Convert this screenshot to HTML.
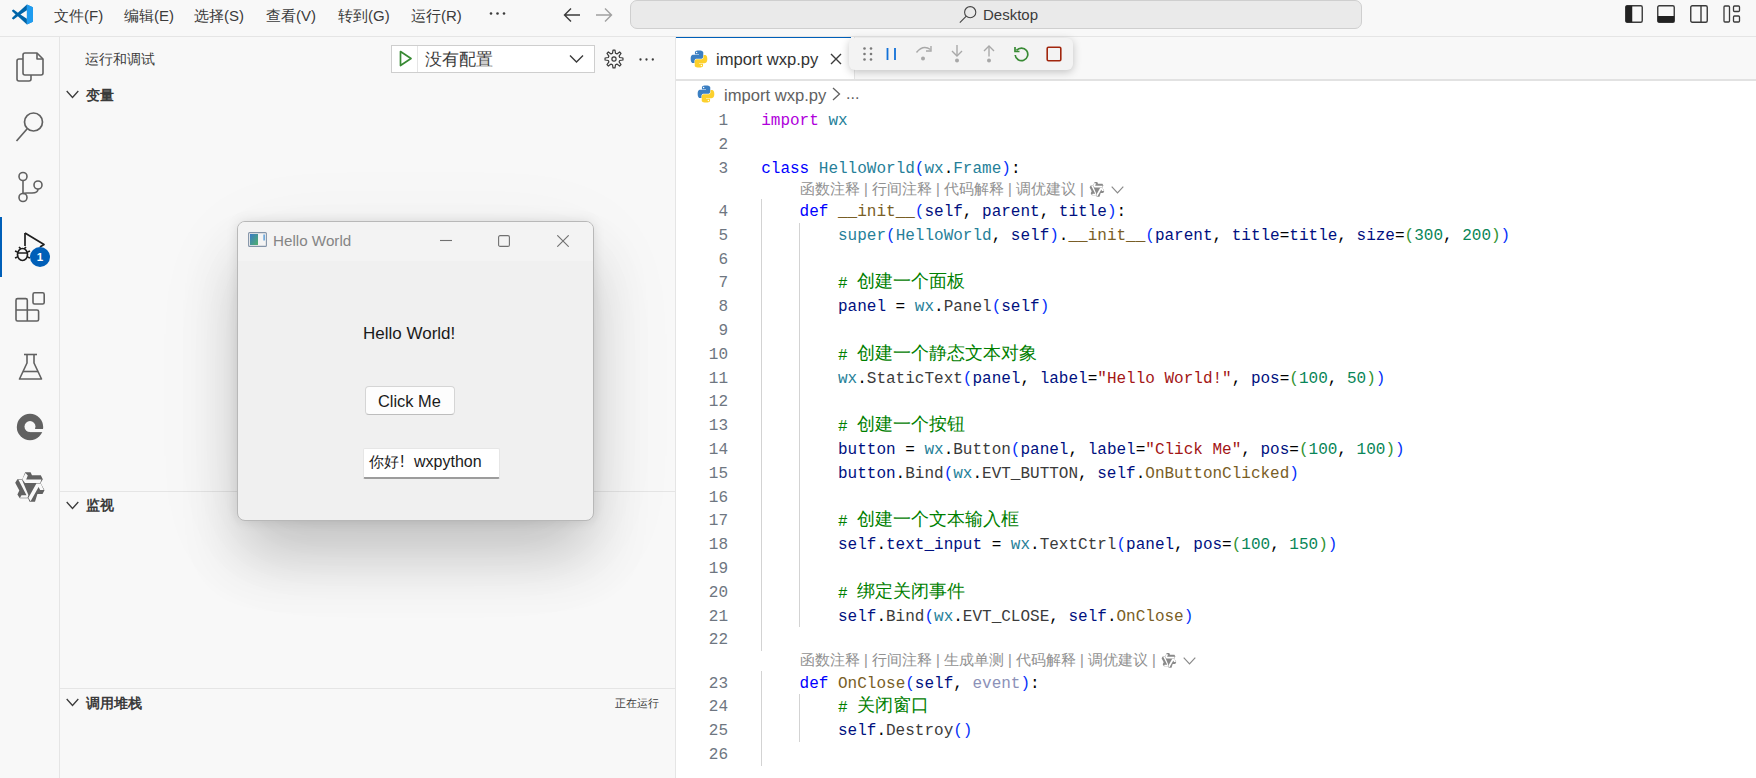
<!DOCTYPE html>
<html><head><meta charset="utf-8">
<style>
*{box-sizing:border-box}
html,body{margin:0;padding:0}
body{width:1756px;height:778px;overflow:hidden;position:relative;background:#f8f8f8;font-family:"Liberation Sans",sans-serif;color:#3b3b3b}
.a{position:absolute}
.menu{position:absolute;top:5px;font-size:15px;line-height:22px;color:#3b3b3b;white-space:nowrap}
.ico{position:absolute}
.ln{position:absolute;left:690px;width:38px;text-align:right;font-family:"Liberation Mono",monospace;font-size:16px;line-height:24px;height:24px;color:#6e7681;white-space:pre}
.cl{position:absolute;left:761.2px;font-family:"Liberation Mono",monospace;font-size:16px;line-height:24px;height:24px;white-space:pre}
.ig{position:absolute;width:1px;background:#d3d3d3}
.lens{position:absolute;left:800px;font-size:14.7px;line-height:19px;color:#919191;white-space:pre}
.sect{position:absolute;left:86px;margin-top:1px;font-size:13.75px;font-weight:bold;color:#3b3b3b;line-height:20px}
.chev{position:absolute}
.cjk{font-size:17.6px;position:relative;top:-1px}
</style></head>
<body>
<!-- title bar -->
<div class="a" style="left:0;top:0;width:1756px;height:36px;background:#f8f8f8"></div>
<div class="a" style="left:0;top:36px;width:1756px;height:1px;background:#e5e5e5"></div>
<svg class="ico" style="left:12px;top:4px" width="21" height="21" viewBox="0 0 100 100">
 <path d="M71 2 L97 14 Q100 16 100 20 L100 80 Q100 84 97 86 L71 98 Z" fill="#2489ca"/>
 <path d="M71 2 L28 42 L9 27 Q6 25 3 28 L1 30 Q-1 33 2 36 L17 50 L2 64 Q-1 67 1 70 L3 72 Q6 75 9 73 L28 58 L71 98 L71 70 L40 50 L71 30 Z" fill="#0065a9"/>
 <path d="M71 2 L97 14 Q100 16 100 20 L100 80 Q100 84 97 86 L71 98 Z" fill="#1f9cf0"/>
</svg>
<div class="menu" style="left:54px">文件(F)</div>
<div class="menu" style="left:124px">编辑(E)</div>
<div class="menu" style="left:194px">选择(S)</div>
<div class="menu" style="left:266px">查看(V)</div>
<div class="menu" style="left:338px">转到(G)</div>
<div class="menu" style="left:411px">运行(R)</div>
<svg class="ico" style="left:489px;top:11px" width="17" height="5" viewBox="0 0 17 5"><circle cx="2" cy="2.5" r="1.3" fill="#3b3b3b"/><circle cx="8.5" cy="2.5" r="1.3" fill="#3b3b3b"/><circle cx="15" cy="2.5" r="1.3" fill="#3b3b3b"/></svg>
<svg class="ico" style="left:563px;top:7px" width="18" height="16" viewBox="0 0 18 16"><path d="M1.5 8 H17 M8 1.5 L1.5 8 L8 14.5" stroke="#3b3b3b" stroke-width="1.4" fill="none"/></svg>
<svg class="ico" style="left:595px;top:7px" width="18" height="16" viewBox="0 0 18 16"><path d="M16.5 8 H1 M10 1.5 L16.5 8 L10 14.5" stroke="#a0a0a0" stroke-width="1.4" fill="none"/></svg>
<div class="a" style="left:630px;top:0px;width:732px;height:29px;background:#eaeaea;border:1px solid #cfcfcf;border-radius:7px"></div>
<svg class="ico" style="left:959px;top:5px" width="19" height="19" viewBox="0 0 19 19"><circle cx="11.2" cy="7.2" r="5.6" stroke="#444" stroke-width="1.1" fill="none"/><path d="M7.3 11.2 L0.8 17.7" stroke="#444" stroke-width="1.1"/></svg>
<div class="a" style="left:983px;top:4.5px;font-size:15px;line-height:20px;color:#3b3b3b">Desktop</div>
<!-- layout icons -->
<svg class="ico" style="left:1625px;top:5px" width="18" height="18" viewBox="0 0 18 18"><rect x="0.75" y="0.75" width="16.5" height="16.5" rx="1.5" fill="none" stroke="#3b3b3b" stroke-width="1.4"/><rect x="0.75" y="0.75" width="6.5" height="16.5" fill="#222"/></svg>
<svg class="ico" style="left:1657px;top:5px" width="18" height="18" viewBox="0 0 18 18"><rect x="0.75" y="0.75" width="16.5" height="16.5" rx="1.5" fill="none" stroke="#3b3b3b" stroke-width="1.4"/><rect x="0.75" y="11" width="16.5" height="6.25" fill="#222"/></svg>
<svg class="ico" style="left:1690px;top:5px" width="18" height="18" viewBox="0 0 18 18"><rect x="0.75" y="0.75" width="16.5" height="16.5" rx="1.5" fill="none" stroke="#3b3b3b" stroke-width="1.4"/><path d="M11 1 V17" stroke="#3b3b3b" stroke-width="1.4"/></svg>
<svg class="ico" style="left:1723px;top:5px" width="18" height="18" viewBox="0 0 18 18"><rect x="1" y="1" width="5.5" height="16" rx="1" fill="none" stroke="#3b3b3b" stroke-width="1.3"/><rect x="10.5" y="1" width="6" height="5.5" rx="1" fill="none" stroke="#3b3b3b" stroke-width="1.3"/><rect x="10.5" y="11" width="6" height="6" rx="1" fill="none" stroke="#3b3b3b" stroke-width="1.3"/></svg>

<!-- activity bar -->
<div class="a" style="left:59px;top:37px;width:1px;height:741px;background:#e5e5e5"></div>
<div class="a" style="left:0;top:217px;width:2px;height:60px;background:#005fb8"></div>
<!-- explorer -->
<svg class="ico" style="left:15px;top:51px" width="30" height="32" viewBox="0 0 30 32"><g fill="none" stroke="#616161" stroke-width="1.6" stroke-linejoin="round"><path d="M8 8 H4 Q2 8 2 10 V28 Q2 30 4 30 H14 Q16 30 16 28 V24"/><path d="M10 2 H22 L28 8 V22 Q28 24 26 24 H10 Q8 24 8 22 V4 Q8 2 10 2 Z"/><path d="M22 2 V8 H28"/></g></svg>
<!-- search -->
<svg class="ico" style="left:15px;top:111px" width="30" height="32" viewBox="0 0 30 32"><g fill="none" stroke="#616161" stroke-width="1.7"><circle cx="18.5" cy="11" r="9"/><path d="M12 18 L1.5 30"/></g></svg>
<!-- source control -->
<svg class="ico" style="left:17px;top:171px" width="28" height="32" viewBox="0 0 28 32"><g fill="none" stroke="#616161" stroke-width="1.6"><circle cx="6" cy="5.5" r="4"/><circle cx="6" cy="26.5" r="4"/><circle cx="21" cy="14" r="4"/><path d="M6 9.5 V22.5"/><path d="M21 18 Q21 22 15 22 H10 Q6.5 22 6 23"/></g></svg>
<!-- run & debug -->
<svg class="ico" style="left:14px;top:231px" width="34" height="34" viewBox="0 0 34 34"><g fill="none" stroke="#1e1e1e" stroke-width="1.7" stroke-linejoin="round"><path d="M11 2 L30 13.5 L26 16" /><path d="M11 2 V15"/><ellipse cx="8.5" cy="23.5" rx="5" ry="6"/><path d="M3.5 22 H13.5 M1 20 L3.5 21 M1 27 L3.5 26 M16 20 L13.5 21 M16 27 L13.5 26 M5 16 L7 18 M12 16 L10 18"/></g></svg>
<div class="a" style="left:30px;top:247px;width:20px;height:20px;border-radius:10px;background:#005fb8;color:#fff;font-size:11.5px;font-weight:bold;line-height:20px;text-align:center">1</div>
<!-- extensions -->
<svg class="ico" style="left:14px;top:291px" width="32" height="32" viewBox="0 0 32 32"><g fill="none" stroke="#616161" stroke-width="1.6" stroke-linejoin="round"><path d="M2 9.2 Q2 7.6 3.6 7.6 H11.7 Q13.3 7.6 13.3 9.2 V19 H23 Q24.6 19 24.6 20.6 V28.4 Q24.6 30 23 30 H3.6 Q2 30 2 28.4 Z M2 19 H13.3 M13.3 19 V30"/><rect x="19" y="1.8" width="11.2" height="11.2" rx="1.6"/></g></svg>
<!-- testing flask -->
<svg class="ico" style="left:18px;top:353px" width="25" height="28" viewBox="0 0 25 28"><g fill="none" stroke="#616161" stroke-width="1.6" stroke-linejoin="round"><path d="M6 1.5 H19"/><path d="M9 1.5 V10 L1.5 26 H23.5 L16 10 V1.5"/><path d="M5 18.5 H20"/></g></svg>
<!-- circle c -->
<svg class="ico" style="left:10px;top:405px" width="40" height="44" viewBox="0 0 40 44"><circle cx="20" cy="22" r="13.2" fill="#616161"/><circle cx="20" cy="21.6" r="5.5" fill="#f8f8f8"/><rect x="20" y="24" width="15" height="3.1" fill="#f8f8f8"/></svg>
<!-- tongyi star -->
<svg class="ico" style="left:12px;top:468px" width="36" height="38" viewBox="0 0 36 38"><path d="M13.2 4.2 L18.6 4.2 L20 7.3 L28.8 7.3 L30.8 11.2 L28.6 15.1 L32.5 22.2 L30.5 25.9 L25.4 25.9 L23 33.7 L17.6 33.7 L16.1 30.3 L7.8 30.3 L5.4 26.4 L7.3 22.5 L3.2 14.7 L5.4 11.2 L10.3 11.2 Z" fill="#616161"/>
<g fill="#f8f8f8"><path d="M13.5 5 L15.8 7.5 L14.2 11.4 L29.5 11.4 L28.2 15 L13 15 L10.3 11.3 Z"/><path d="M6.4 11.7 L10 11.7 L16.4 27 L15.6 29.8 L8 29.8 L9.5 27.3 L14.5 27.3 Z"/><path d="M24.4 15.6 L28.8 15.6 L31.8 22 L28.1 22 L26.6 19 L18.6 33.2 L16.4 29.8 Z"/></g></svg>

<!-- sidebar -->
<div class="a" style="left:675px;top:37px;width:1px;height:741px;background:#e5e5e5"></div>
<div class="a" style="left:85px;top:49.8px;font-size:13.75px;line-height:20px;color:#3b3b3b">运行和调试</div>
<div class="a" style="left:391px;top:45px;width:204px;height:28px;background:#ffffff;border:1px solid #cecece"></div>
<div class="a" style="left:417px;top:46px;width:1px;height:26px;background:#e5e5e5"></div>
<svg class="ico" style="left:399px;top:50px" width="14" height="17" viewBox="0 0 14 17"><path d="M1.5 1.5 L12 8.5 L1.5 15.5 Z" fill="none" stroke="#388a34" stroke-width="1.7" stroke-linejoin="round"/></svg>
<div class="a" style="left:425px;top:48px;font-size:16.5px;line-height:22px;color:#3b3b3b">没有配置</div>
<svg class="ico" style="left:569px;top:54px" width="15" height="10" viewBox="0 0 15 10"><path d="M1 1.5 L7.5 8 L14 1.5" stroke="#3b3b3b" stroke-width="1.4" fill="none"/></svg>
<svg class="ico" style="left:604px;top:49px" width="20" height="20" viewBox="0 0 20 20"><g fill="none" stroke="#3b3b3b" stroke-width="1.2" stroke-linejoin="round"><path d="M11.52 15.70 L10.99 18.95 L9.01 18.95 L8.48 15.70 L7.04 15.10 L4.37 17.02 L2.98 15.63 L4.90 12.96 L4.30 11.52 L1.05 10.99 L1.05 9.01 L4.30 8.48 L4.90 7.04 L2.98 4.37 L4.37 2.98 L7.04 4.90 L8.48 4.30 L9.01 1.05 L10.99 1.05 L11.52 4.30 L12.96 4.90 L15.63 2.98 L17.02 4.37 L15.10 7.04 L15.70 8.48 L18.95 9.01 L18.95 10.99 L15.70 11.52 L15.10 12.96 L17.02 15.63 L15.63 17.02 L12.96 15.10 Z"/><circle cx="10" cy="10" r="2.1"/></g></svg>
<svg class="ico" style="left:638px;top:56.5px" width="17" height="5" viewBox="0 0 17 5"><circle cx="2.5" cy="2.5" r="1.15" fill="#3b3b3b"/><circle cx="8.5" cy="2.5" r="1.15" fill="#3b3b3b"/><circle cx="14.8" cy="2.5" r="1.15" fill="#3b3b3b"/></svg>

<svg class="ico" style="left:66px;top:90px" width="13" height="9" viewBox="0 0 13 9"><path d="M0.7 1 L6.5 7.5 L12.3 1" stroke="#3b3b3b" stroke-width="1.3" fill="none"/></svg>
<div class="sect" style="top:85px">变量</div>
<div class="a" style="left:60px;top:491px;width:615px;height:1px;background:#e5e5e5"></div>
<svg class="ico" style="left:66px;top:501px" width="13" height="9" viewBox="0 0 13 9"><path d="M0.7 1 L6.5 7.5 L12.3 1" stroke="#3b3b3b" stroke-width="1.3" fill="none"/></svg>
<div class="sect" style="top:495px">监视</div>
<div class="a" style="left:60px;top:688px;width:615px;height:1px;background:#e5e5e5"></div>
<svg class="ico" style="left:66px;top:698px" width="13" height="9" viewBox="0 0 13 9"><path d="M0.7 1 L6.5 7.5 L12.3 1" stroke="#3b3b3b" stroke-width="1.3" fill="none"/></svg>
<div class="sect" style="top:693px">调用堆栈</div>
<div class="a" style="left:615px;top:693px;font-size:11.2px;line-height:20px;color:#3b3b3b">正在运行</div>

<!-- editor -->
<div class="a" style="left:676px;top:81px;width:1080px;height:697px;background:#ffffff"></div>
<div class="a" style="left:676px;top:37px;width:178px;height:42px;background:#ffffff"></div>
<div class="a" style="left:676px;top:79px;width:1080px;height:2px;background:#e2e2e2"></div>
<div class="a" style="left:676px;top:37px;width:175px;height:1px;background:#005fb8"></div>
<div class="a" style="left:854px;top:37px;width:1px;height:42px;background:#e5e5e5"></div>
<svg class="ico" style="left:690px;top:50px" width="18" height="18" viewBox="0 0 16 16"><path d="M7.9 0.5 C4.2 0.5 4.4 2.1 4.4 2.1 V3.8 H8 V4.3 H3 C3 4.3 0.6 4 0.6 7.9 C0.6 11.7 2.7 11.6 2.7 11.6 H4 V9.8 C4 9.8 3.9 7.7 6.1 7.7 H9.7 C9.7 7.7 11.8 7.7 11.8 5.7 V2.3 C11.8 2.3 12.1 0.5 7.9 0.5 Z M5.9 1.6 A0.65 0.65 0 1 1 5.9 2.9 A0.65 0.65 0 1 1 5.9 1.6Z" fill="#3b7fc2"/><path d="M8.1 15.5 C11.8 15.5 11.6 13.9 11.6 13.9 V12.2 H8 V11.7 H13 C13 11.7 15.4 12 15.4 8.1 C15.4 4.3 13.3 4.4 13.3 4.4 H12 V6.2 C12 6.2 12.1 8.3 9.9 8.3 H6.3 C6.3 8.3 4.2 8.3 4.2 10.3 V13.7 C4.2 13.7 3.9 15.5 8.1 15.5 Z M10.1 14.4 A0.65 0.65 0 1 1 10.1 13.1 A0.65 0.65 0 1 1 10.1 14.4Z" fill="#fcd02c"/></svg>
<div class="a" style="left:716px;top:48.5px;font-size:16.6px;line-height:22px;color:#333333">import wxp.py</div>
<svg class="ico" style="left:830px;top:53px" width="12" height="12" viewBox="0 0 12 12"><path d="M1 1 L11 11 M11 1 L1 11" stroke="#3b3b3b" stroke-width="1.4"/></svg>

<!-- breadcrumbs -->
<svg class="ico" style="left:697px;top:85px" width="18" height="18" viewBox="0 0 16 16"><path d="M7.9 0.5 C4.2 0.5 4.4 2.1 4.4 2.1 V3.8 H8 V4.3 H3 C3 4.3 0.6 4 0.6 7.9 C0.6 11.7 2.7 11.6 2.7 11.6 H4 V9.8 C4 9.8 3.9 7.7 6.1 7.7 H9.7 C9.7 7.7 11.8 7.7 11.8 5.7 V2.3 C11.8 2.3 12.1 0.5 7.9 0.5 Z M5.9 1.6 A0.65 0.65 0 1 1 5.9 2.9 A0.65 0.65 0 1 1 5.9 1.6Z" fill="#3b7fc2"/><path d="M8.1 15.5 C11.8 15.5 11.6 13.9 11.6 13.9 V12.2 H8 V11.7 H13 C13 11.7 15.4 12 15.4 8.1 C15.4 4.3 13.3 4.4 13.3 4.4 H12 V6.2 C12 6.2 12.1 8.3 9.9 8.3 H6.3 C6.3 8.3 4.2 8.3 4.2 10.3 V13.7 C4.2 13.7 3.9 15.5 8.1 15.5 Z M10.1 14.4 A0.65 0.65 0 1 1 10.1 13.1 A0.65 0.65 0 1 1 10.1 14.4Z" fill="#fcd02c"/></svg>
<div class="a" style="left:724px;top:85px;font-size:16.6px;line-height:22px;color:#616161">import wxp.py</div>
<svg class="ico" style="left:832px;top:87px" width="9" height="14" viewBox="0 0 9 14"><path d="M1 1 L7.5 7 L1 13" stroke="#616161" stroke-width="1.3" fill="none"/></svg>
<div class="a" style="left:846px;top:83px;font-size:16px;line-height:22px;color:#616161">...</div>

<div class="ig" style="left:761px;top:198.9px;height:452.2px"></div>
<div class="ig" style="left:761px;top:670.6px;height:95.2px"></div>
<div class="ig" style="left:799px;top:222.7px;height:404.6px"></div>
<div class="ig" style="left:799px;top:694.4px;height:47.6px"></div>
<div class="ln" style="top:109.00px">1</div>
<div class="cl" style="top:109.00px"><span style="color:#af00db">import</span><span style="color:#3b3b3b"> </span><span style="color:#267f99">wx</span></div>
<div class="ln" style="top:132.80px">2</div>
<div class="cl" style="top:132.80px"></div>
<div class="ln" style="top:156.60px">3</div>
<div class="cl" style="top:156.60px"><span style="color:#0000ff">class</span><span style="color:#3b3b3b"> </span><span style="color:#267f99">HelloWorld</span><span style="color:#0431fa">(</span><span style="color:#267f99">wx</span><span style="color:#000000">.</span><span style="color:#267f99">Frame</span><span style="color:#0431fa">)</span><span style="color:#000000">:</span></div>
<div class="ln" style="top:199.90px">4</div>
<div class="cl" style="top:199.90px"><span style="color:#3b3b3b">    </span><span style="color:#0000ff">def</span><span style="color:#3b3b3b"> </span><span style="color:#795e26">__init__</span><span style="color:#0431fa">(</span><span style="color:#001080">self</span><span style="color:#000000">, </span><span style="color:#001080">parent</span><span style="color:#000000">, </span><span style="color:#001080">title</span><span style="color:#0431fa">)</span><span style="color:#000000">:</span></div>
<div class="ln" style="top:223.70px">5</div>
<div class="cl" style="top:223.70px"><span style="color:#3b3b3b">        </span><span style="color:#267f99">super</span><span style="color:#0431fa">(</span><span style="color:#267f99">HelloWorld</span><span style="color:#000000">, </span><span style="color:#001080">self</span><span style="color:#0431fa">)</span><span style="color:#000000">.</span><span style="color:#795e26">__init__</span><span style="color:#0431fa">(</span><span style="color:#001080">parent</span><span style="color:#000000">, </span><span style="color:#001080">title</span><span style="color:#000000">=</span><span style="color:#001080">title</span><span style="color:#000000">, </span><span style="color:#001080">size</span><span style="color:#000000">=</span><span style="color:#319331">(</span><span style="color:#098658">300</span><span style="color:#000000">, </span><span style="color:#098658">200</span><span style="color:#319331">)</span><span style="color:#0431fa">)</span></div>
<div class="ln" style="top:247.50px">6</div>
<div class="cl" style="top:247.50px"></div>
<div class="ln" style="top:271.30px">7</div>
<div class="cl" style="top:271.30px"><span style="color:#3b3b3b">        </span><span style="color:#008000"># <span class="cjk">创建一个面板</span></span></div>
<div class="ln" style="top:295.10px">8</div>
<div class="cl" style="top:295.10px"><span style="color:#3b3b3b">        </span><span style="color:#001080">panel</span><span style="color:#000000"> = </span><span style="color:#267f99">wx</span><span style="color:#000000">.</span><span style="color:#3b3b3b">Panel</span><span style="color:#0431fa">(</span><span style="color:#001080">self</span><span style="color:#0431fa">)</span></div>
<div class="ln" style="top:318.90px">9</div>
<div class="cl" style="top:318.90px"></div>
<div class="ln" style="top:342.70px">10</div>
<div class="cl" style="top:342.70px"><span style="color:#3b3b3b">        </span><span style="color:#008000"># <span class="cjk">创建一个静态文本对象</span></span></div>
<div class="ln" style="top:366.50px">11</div>
<div class="cl" style="top:366.50px"><span style="color:#3b3b3b">        </span><span style="color:#267f99">wx</span><span style="color:#000000">.</span><span style="color:#3b3b3b">StaticText</span><span style="color:#0431fa">(</span><span style="color:#001080">panel</span><span style="color:#000000">, </span><span style="color:#001080">label</span><span style="color:#000000">=</span><span style="color:#a31515">&quot;Hello World!&quot;</span><span style="color:#000000">, </span><span style="color:#001080">pos</span><span style="color:#000000">=</span><span style="color:#319331">(</span><span style="color:#098658">100</span><span style="color:#000000">, </span><span style="color:#098658">50</span><span style="color:#319331">)</span><span style="color:#0431fa">)</span></div>
<div class="ln" style="top:390.30px">12</div>
<div class="cl" style="top:390.30px"></div>
<div class="ln" style="top:414.10px">13</div>
<div class="cl" style="top:414.10px"><span style="color:#3b3b3b">        </span><span style="color:#008000"># <span class="cjk">创建一个按钮</span></span></div>
<div class="ln" style="top:437.90px">14</div>
<div class="cl" style="top:437.90px"><span style="color:#3b3b3b">        </span><span style="color:#001080">button</span><span style="color:#000000"> = </span><span style="color:#267f99">wx</span><span style="color:#000000">.</span><span style="color:#3b3b3b">Button</span><span style="color:#0431fa">(</span><span style="color:#001080">panel</span><span style="color:#000000">, </span><span style="color:#001080">label</span><span style="color:#000000">=</span><span style="color:#a31515">&quot;Click Me&quot;</span><span style="color:#000000">, </span><span style="color:#001080">pos</span><span style="color:#000000">=</span><span style="color:#319331">(</span><span style="color:#098658">100</span><span style="color:#000000">, </span><span style="color:#098658">100</span><span style="color:#319331">)</span><span style="color:#0431fa">)</span></div>
<div class="ln" style="top:461.70px">15</div>
<div class="cl" style="top:461.70px"><span style="color:#3b3b3b">        </span><span style="color:#001080">button</span><span style="color:#000000">.</span><span style="color:#3b3b3b">Bind</span><span style="color:#0431fa">(</span><span style="color:#267f99">wx</span><span style="color:#000000">.</span><span style="color:#3b3b3b">EVT_BUTTON</span><span style="color:#000000">, </span><span style="color:#001080">self</span><span style="color:#000000">.</span><span style="color:#795e26">OnButtonClicked</span><span style="color:#0431fa">)</span></div>
<div class="ln" style="top:485.50px">16</div>
<div class="cl" style="top:485.50px"></div>
<div class="ln" style="top:509.30px">17</div>
<div class="cl" style="top:509.30px"><span style="color:#3b3b3b">        </span><span style="color:#008000"># <span class="cjk">创建一个文本输入框</span></span></div>
<div class="ln" style="top:533.10px">18</div>
<div class="cl" style="top:533.10px"><span style="color:#3b3b3b">        </span><span style="color:#001080">self</span><span style="color:#000000">.</span><span style="color:#001080">text_input</span><span style="color:#000000"> = </span><span style="color:#267f99">wx</span><span style="color:#000000">.</span><span style="color:#3b3b3b">TextCtrl</span><span style="color:#0431fa">(</span><span style="color:#001080">panel</span><span style="color:#000000">, </span><span style="color:#001080">pos</span><span style="color:#000000">=</span><span style="color:#319331">(</span><span style="color:#098658">100</span><span style="color:#000000">, </span><span style="color:#098658">150</span><span style="color:#319331">)</span><span style="color:#0431fa">)</span></div>
<div class="ln" style="top:556.90px">19</div>
<div class="cl" style="top:556.90px"></div>
<div class="ln" style="top:580.70px">20</div>
<div class="cl" style="top:580.70px"><span style="color:#3b3b3b">        </span><span style="color:#008000"># <span class="cjk">绑定关闭事件</span></span></div>
<div class="ln" style="top:604.50px">21</div>
<div class="cl" style="top:604.50px"><span style="color:#3b3b3b">        </span><span style="color:#001080">self</span><span style="color:#000000">.</span><span style="color:#3b3b3b">Bind</span><span style="color:#0431fa">(</span><span style="color:#267f99">wx</span><span style="color:#000000">.</span><span style="color:#3b3b3b">EVT_CLOSE</span><span style="color:#000000">, </span><span style="color:#001080">self</span><span style="color:#000000">.</span><span style="color:#795e26">OnClose</span><span style="color:#0431fa">)</span></div>
<div class="ln" style="top:628.30px">22</div>
<div class="cl" style="top:628.30px"></div>
<div class="ln" style="top:671.60px">23</div>
<div class="cl" style="top:671.60px"><span style="color:#3b3b3b">    </span><span style="color:#0000ff">def</span><span style="color:#3b3b3b"> </span><span style="color:#795e26">OnClose</span><span style="color:#0431fa">(</span><span style="color:#001080">self</span><span style="color:#000000">, </span><span style="color:#8c91b8">event</span><span style="color:#0431fa">)</span><span style="color:#000000">:</span></div>
<div class="ln" style="top:695.40px">24</div>
<div class="cl" style="top:695.40px"><span style="color:#3b3b3b">        </span><span style="color:#008000"># <span class="cjk">关闭窗口</span></span></div>
<div class="ln" style="top:719.20px">25</div>
<div class="cl" style="top:719.20px"><span style="color:#3b3b3b">        </span><span style="color:#001080">self</span><span style="color:#000000">.</span><span style="color:#3b3b3b">Destroy</span><span style="color:#0431fa">(</span><span style="color:#0431fa">)</span></div>
<div class="ln" style="top:743.00px">26</div>
<div class="cl" style="top:743.00px"></div>

<div class="lens" style="top:179.9px">函数注释 | 行间注释 | 代码解释 | 调优建议 | </div>
<svg class="ico" style="left:1088px;top:180.4px" width="18" height="19" viewBox="0 0 36 38"><path d="M13.2 4.2 L18.6 4.2 L20 7.3 L28.8 7.3 L30.8 11.2 L28.6 15.1 L32.5 22.2 L30.5 25.9 L25.4 25.9 L23 33.7 L17.6 33.7 L16.1 30.3 L7.8 30.3 L5.4 26.4 L7.3 22.5 L3.2 14.7 L5.4 11.2 L10.3 11.2 Z" fill="#8a8a8a"/>
<g fill="#ffffff"><path d="M13.5 5 L15.8 7.5 L14.2 11.4 L29.5 11.4 L28.2 15 L13 15 L10.3 11.3 Z"/><path d="M6.4 11.7 L10 11.7 L16.4 27 L15.6 29.8 L8 29.8 L9.5 27.3 L14.5 27.3 Z"/><path d="M24.4 15.6 L28.8 15.6 L31.8 22 L28.1 22 L26.6 19 L18.6 33.2 L16.4 29.8 Z"/></g></svg>
<svg class="ico" style="left:1111px;top:186.4px" width="13" height="8" viewBox="0 0 13 8"><path d="M0.7 0.7 L6.5 6.8 L12.3 0.7" stroke="#8a8a8a" stroke-width="1.2" fill="none"/></svg>
<div class="lens" style="top:650.6px">函数注释 | 行间注释 | 生成单测 | 代码解释 | 调优建议 | </div>
<svg class="ico" style="left:1160px;top:651.1px" width="18" height="19" viewBox="0 0 36 38"><path d="M13.2 4.2 L18.6 4.2 L20 7.3 L28.8 7.3 L30.8 11.2 L28.6 15.1 L32.5 22.2 L30.5 25.9 L25.4 25.9 L23 33.7 L17.6 33.7 L16.1 30.3 L7.8 30.3 L5.4 26.4 L7.3 22.5 L3.2 14.7 L5.4 11.2 L10.3 11.2 Z" fill="#8a8a8a"/>
<g fill="#ffffff"><path d="M13.5 5 L15.8 7.5 L14.2 11.4 L29.5 11.4 L28.2 15 L13 15 L10.3 11.3 Z"/><path d="M6.4 11.7 L10 11.7 L16.4 27 L15.6 29.8 L8 29.8 L9.5 27.3 L14.5 27.3 Z"/><path d="M24.4 15.6 L28.8 15.6 L31.8 22 L28.1 22 L26.6 19 L18.6 33.2 L16.4 29.8 Z"/></g></svg>
<svg class="ico" style="left:1183px;top:657.1px" width="13" height="8" viewBox="0 0 13 8"><path d="M0.7 0.7 L6.5 6.8 L12.3 0.7" stroke="#8a8a8a" stroke-width="1.2" fill="none"/></svg>

<!-- debug toolbar -->
<div class="a" style="left:849px;top:38px;width:224px;height:32px;background:#f3f3f3;border-radius:6px;box-shadow:0 2px 8px rgba(0,0,0,0.22)"></div>
<svg class="ico" style="left:863px;top:47px" width="10" height="14" viewBox="0 0 10 14"><g fill="#7a7a7a"><circle cx="1.5" cy="1.5" r="1.3"/><circle cx="8" cy="1.5" r="1.3"/><circle cx="1.5" cy="7" r="1.3"/><circle cx="8" cy="7" r="1.3"/><circle cx="1.5" cy="12.5" r="1.3"/><circle cx="8" cy="12.5" r="1.3"/></g></svg>
<svg class="ico" style="left:886px;top:47px" width="11" height="14" viewBox="0 0 11 14"><path d="M1.5 1 V13 M9 1 V13" stroke="#1170d8" stroke-width="1.8"/></svg>
<svg class="ico" style="left:915px;top:45px" width="18" height="18" viewBox="0 0 18 18"><g fill="none" stroke="#a8a8a8" stroke-width="1.4"><path d="M1.5 7.5 Q8 -0.5 15.5 4.5"/><path d="M16 1 V6 H11"/></g><circle cx="8" cy="13.5" r="2" fill="#a8a8a8"/></svg>
<svg class="ico" style="left:951px;top:45px" width="12" height="19" viewBox="0 0 12 19"><g fill="none" stroke="#a8a8a8" stroke-width="1.4"><path d="M6 0 V10.5"/><path d="M1 6 L6 11 L11 6"/></g><circle cx="6" cy="15.5" r="2" fill="#a8a8a8"/></svg>
<svg class="ico" style="left:983px;top:45px" width="12" height="19" viewBox="0 0 12 19"><g fill="none" stroke="#a8a8a8" stroke-width="1.4"><path d="M6 1 V11.5"/><path d="M1 6 L6 1 L11 6"/></g><circle cx="6" cy="15.5" r="2" fill="#a8a8a8"/></svg>
<svg class="ico" style="left:1013px;top:46px" width="18" height="16" viewBox="0 0 18 16"><g fill="none" stroke="#388a34" stroke-width="1.7"><path d="M3.5 4.5 A6.3 6.3 0 1 1 2.2 9"/><path d="M2 1 V5.5 H6.5"/></g></svg>
<svg class="ico" style="left:1046px;top:46px" width="16" height="16" viewBox="0 0 16 16"><rect x="1.2" y="1.2" width="13.6" height="13.6" rx="1.2" fill="none" stroke="#a1260d" stroke-width="1.6"/></svg>

<!-- dialog window -->
<div class="a" style="left:237px;top:221px;width:357px;height:300px;border-radius:8px;background:#f0f0f0;border:1px solid #b8b8b8;box-shadow:0 0 12px rgba(0,0,0,0.10), 0 38px 60px -4px rgba(0,0,0,0.19), 0 24px 100px rgba(0,0,0,0.06);overflow:hidden">
  <div class="a" style="left:0;top:0;width:355px;height:39px;background:#f3f3f3"></div>
</div>
<div class="a" style="left:273px;top:231px;font-size:15.2px;line-height:20px;color:#858585">Hello World</div>
<svg class="ico" style="left:248px;top:232px" width="19" height="15" viewBox="0 0 19 15"><rect x="0.6" y="0.6" width="17.8" height="13.8" rx="1" fill="#f4f4f4" stroke="#8494a8" stroke-width="1.1"/><defs><linearGradient id="wg" x1="0" y1="0" x2="1" y2="1"><stop offset="0" stop-color="#3a7bc8"/><stop offset="1" stop-color="#4fb06a"/></linearGradient></defs><rect x="2" y="2" width="8" height="11" fill="url(#wg)"/><rect x="15.5" y="2.5" width="1.2" height="6" fill="#3a8ad0"/></svg>
<svg class="ico" style="left:440px;top:239px" width="12" height="3" viewBox="0 0 12 3"><path d="M0 1.5 H12" stroke="#707070" stroke-width="1.1"/></svg>
<svg class="ico" style="left:498px;top:235px" width="12" height="12" viewBox="0 0 12 12"><rect x="0.6" y="0.6" width="10.8" height="10.8" rx="1.5" fill="none" stroke="#707070" stroke-width="1.1"/></svg>
<svg class="ico" style="left:557px;top:235px" width="12" height="12" viewBox="0 0 12 12"><path d="M0.3 0.3 L11.7 11.7 M11.7 0.3 L0.3 11.7" stroke="#707070" stroke-width="1.1"/></svg>
<div class="a" style="left:363px;top:324px;font-size:17px;line-height:20px;color:#1a1a1a">Hello World!</div>
<div class="a" style="left:365px;top:386px;width:90px;height:29px;background:#fdfdfd;border:1px solid #d5d5d5;border-bottom-color:#bdbdbd;border-radius:4px"></div>
<div class="a" style="left:378px;top:391px;font-size:16.4px;line-height:20px;color:#1a1a1a">Click Me</div>
<div class="a" style="left:363px;top:448px;width:137px;height:31px;background:#ffffff;border:1px solid #e6e6e6;border-bottom:2px solid #9c9c9c;border-radius:2px"></div>
<div class="a" style="left:369px;top:452px;font-size:14.6px;line-height:20px;color:#1a1a1a">你好</div>
<div class="a" style="left:400px;top:451.5px;font-size:16px;line-height:20px;color:#1a1a1a">!</div>
<div class="a" style="left:414px;top:451.5px;font-size:16px;line-height:20px;color:#1a1a1a">wxpython</div>
</body></html>
